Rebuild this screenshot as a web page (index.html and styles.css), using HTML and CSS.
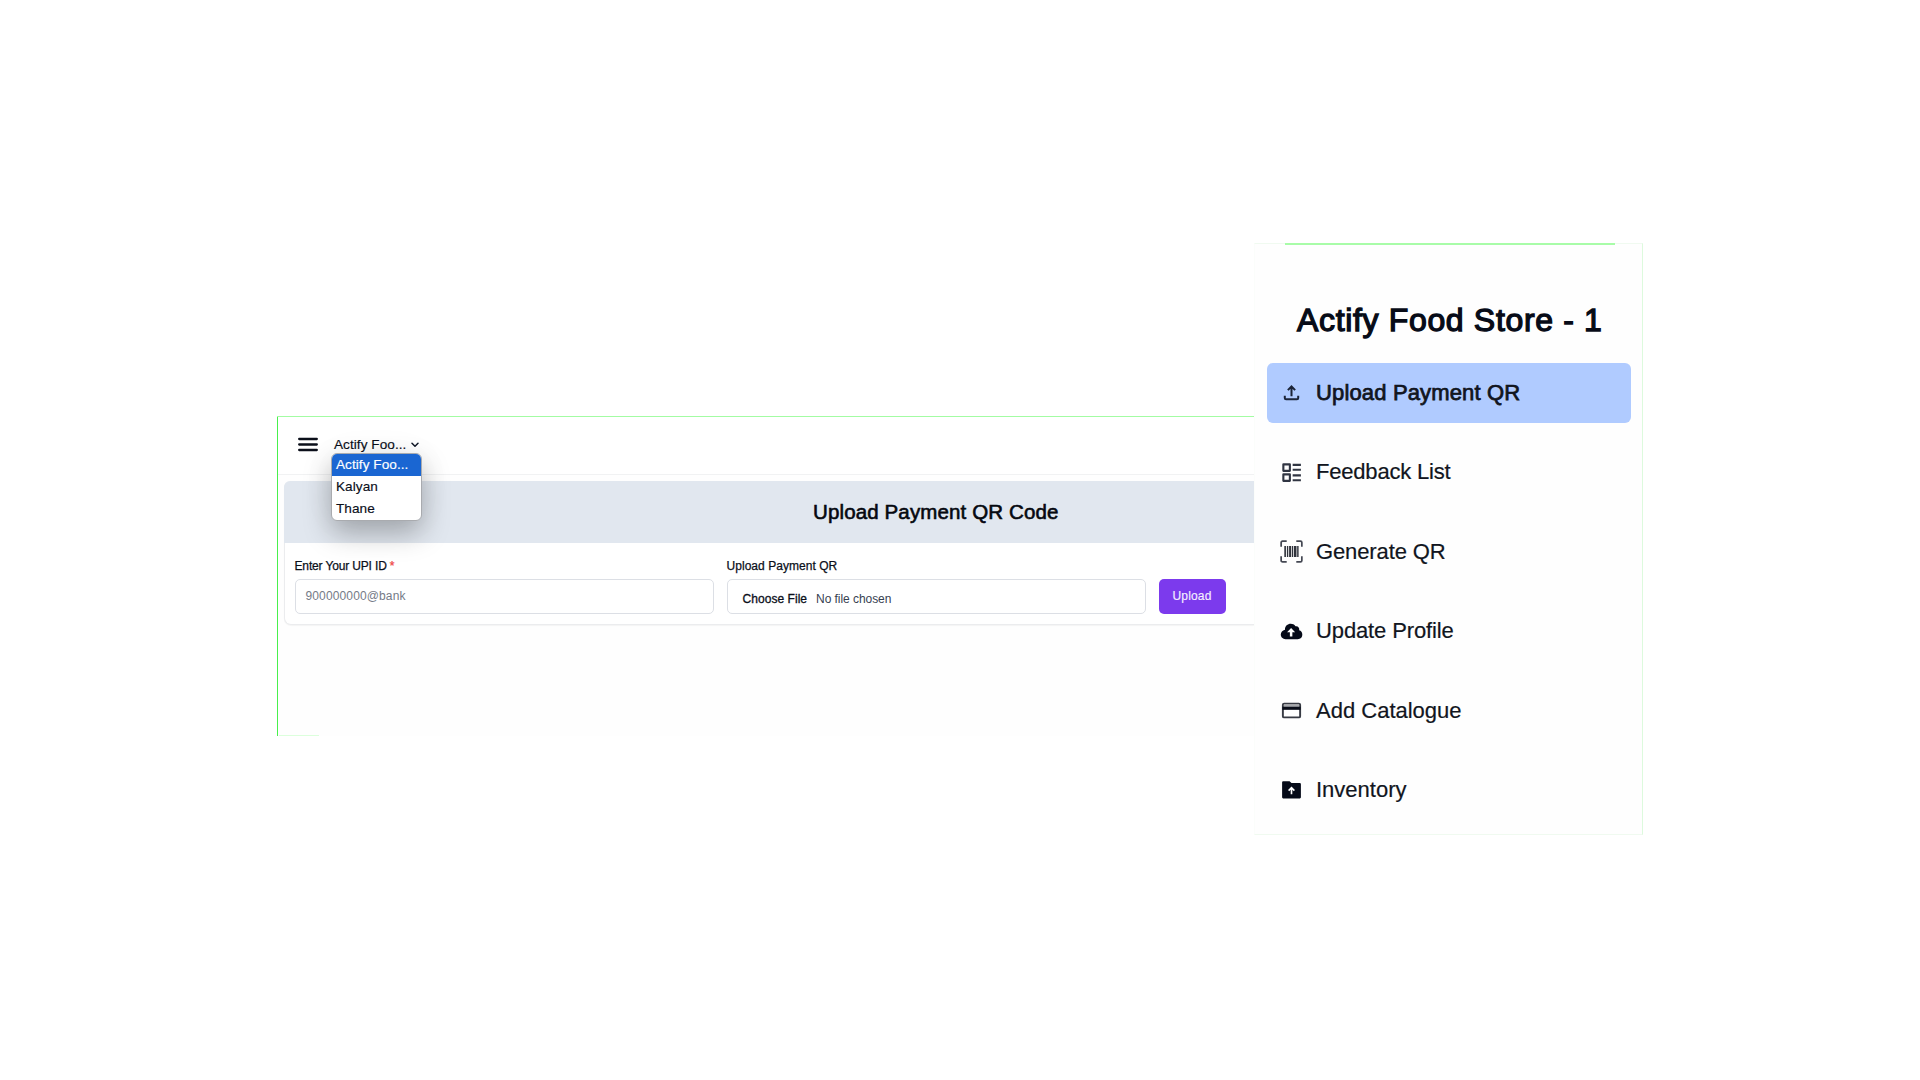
FILE: index.html
```html
<!DOCTYPE html>
<html lang="en">
<head>
<meta charset="utf-8">
<title>Upload Payment QR Code</title>
<link rel="stylesheet" href="styles.css">
</head>
<body>
<main class="stage">
  <section class="panel">
    <header class="topbar">
      <svg class="menu" width="20" height="16" viewBox="0 0 20 16"><path d="M1.200 2h17.600M1.200 7.500h17.600M1.200 13h17.600" stroke="#0b0f1a" stroke-width="2.300" stroke-linecap="round"/></svg>
      <div class="select">
        <span class="select-value">Actify Foo...</span>
        <svg width="8" height="6" viewBox="0 0 8 6"><path d="M1 1.200l3 3 3-3" fill="none" stroke="#111827" stroke-width="1.500" stroke-linecap="round" stroke-linejoin="round"/></svg>
        <ul class="options">
          <li class="selected">Actify Foo...</li>
          <li>Kalyan</li>
          <li>Thane</li>
        </ul>
      </div>
    </header>
    <div class="card">
      <h1 class="card-title">Upload Payment QR Code</h1>
      <form class="form">
        <div class="field">
          <label class="label tight">Enter Your UPI ID <span class="required">*</span></label>
          <div class="input placeholder">900000000@bank</div>
        </div>
        <div class="field">
          <label class="label">Upload Payment QR</label>
          <div class="input file"><span class="choose">Choose File</span><span class="chosen">No file chosen</span></div>
        </div>
        <button class="upload" type="button">Upload</button>
      </form>
    </div>
    <i class="edge-left"></i>
    <i class="edge-foot"></i>
  </section>

  <aside class="sidebar">
    <i class="edge-top"></i>
    <h2 class="store">Actify Food Store - 1</h2>
    <nav class="nav">
      <a class="item active">
        <svg class="icon" viewBox="0 0 24 24"><path d="M12 16V5.800M8.200 9.500L12 5.700l3.800 3.800M5 15.500v2.200q0 1.300 1.300 1.300h11.400q1.300 0 1.300-1.300v-2.200" fill="none" stroke="#1b2438" stroke-width="2.100"/></svg>
        <span>Upload Payment QR</span></a>
      <a class="item fb">
        <svg class="icon" viewBox="0 0 24 24"><path d="M3.500 3.500h6.800v6.800H3.500zM3.500 13.900h6.800v6.800H3.500zM13.200 4h8.600M13.200 9.100h8.600M13.200 15h8.600M13.200 20.100h8.600" fill="none" stroke="#303542" stroke-width="2.200" stroke-linejoin="round"/></svg>
        <span>Feedback List</span></a>
      <a class="item gen">
        <svg class="icon" viewBox="0 0 24 24"><path d="M1.200 7V2.700Q1.200 1.200 2.700 1.200H7M17 1.200h4.300Q22.800 1.200 22.800 2.700V7M22.800 17v4.300Q22.800 22.800 21.300 22.800H17M7 22.800H2.700Q1.200 22.800 1.200 21.300V17" fill="none" stroke="#444853" stroke-width="1.800"/><path d="M4.500 6.300h1.700v11.400H4.500zM7.200 6.300h1.400v11.400H7.200zM9.500 6.300h2v11.400H9.500zM12.300 6.300h1.400v11.400h-1.400zM14.500 6.300h2.700v11.400h-2.700zM17.900 6.300h1.500v11.400h-1.500z" fill="#30333c"/></svg>
        <span>Generate QR</span></a>
      <a class="item upd">
        <svg class="icon" viewBox="0 0 24 24"><path fill-rule="evenodd" d="M20 10.700C20.700 7.800 18.500 6 16.200 6.500 12.800 1.700 4.800 4 5.200 10.200 2.500 10.900.8 13 .8 15.200.8 18 3 20 5.800 20H18.500C21.500 20 23.300 18 23.300 15.400 23.300 12.800 22 11.300 20 10.700ZM12.900 17.200H10.300V12.700H7.400L11.600 8.400 15.800 12.700H12.900Z" fill="#050a18"/></svg>
        <span>Update Profile</span></a>
      <a class="item cat">
        <svg class="icon" viewBox="0 0 24 24"><rect x="3" y="4.800" width="18" height="14.400" rx="1.300" fill="#fff" stroke="#383b44" stroke-width="2"/><path d="M4 5.800h16v2.300H4z" fill="#a6a8ac"/><path d="M2.500 8h19v3.300h-19z" fill="#080c18"/></svg>
        <span>Add Catalogue</span></a>
      <a class="item inv">
        <svg class="icon" viewBox="0 0 24 24"><path d="M3.300 3.300H10l2 2h8.700q1.100 0 1.100 1.100v13.800q0 1.100-1.100 1.100H3.300q-1.100 0-1.100-1.100V4.400q0-1.100 1.100-1.100z" fill="#050a18"/><path d="M12 17V10.500M9 13.200l3-3 3 3" fill="none" stroke="#fff" stroke-width="1.700"/></svg>
        <span>Inventory</span></a>
    </nav>
  </aside>
</main>
</body>
</html>
```
FILE: styles.css
```css
* { box-sizing: border-box; }
body { margin: 0; background: #fff; color: #0b0f1a; font-family: "Liberation Sans", Arial, sans-serif; }
.stage { display: flex; align-items: flex-start; width: 1920px; height: 1080px; padding: 243px 0 0 277px; overflow: hidden; }

.panel { position: relative; width: 977px; height: 320px; margin-top: 173px; padding-left: 1px; border-top: 1px solid #a3fca3; background: #fefefe; }
.edge-left { position: absolute; left: 0; top: 0; width: 1px; height: 319px; background: #48f04c; }
.edge-foot { position: absolute; left: 2px; bottom: 0; width: 40px; height: 1px; background: #dcffdc; }

.topbar { display: flex; align-items: center; height: 58px; padding: 0 0 2px 20px; border-bottom: 1px solid #f1f2f3; background: #fff; }
.menu { margin: 1px 16px 0 0; }
.select { position: relative; display: flex; align-items: center; gap: 4px; font-size: 13.600px; line-height: 22px; letter-spacing: 0.050px; -webkit-text-stroke: 0.150px; }
.select-value { width: 73px; white-space: nowrap; }
.options { position: absolute; z-index: 2; left: -3px; top: 19px; width: 91px; height: 68px; margin: 0; padding: 0; list-style: none; overflow: hidden; border: 1px solid #a9abaf; border-radius: 6px; background: #fff; box-shadow: 0 12px 28px rgba(0, 0, 0, 0.280), 0 0 36px rgba(0, 0, 0, 0.040); }
.options li { height: 22px; padding-left: 4px; line-height: 22px; white-space: nowrap; }
.options .selected { color: #fff; background: #1a66d2; }

.card { height: 144px; margin: 6px 0 0 6px; border: solid #ebecee; border-width: 0 0 1px 1px; border-radius: 7px 0 0 7px; background: #fff; box-shadow: 0 1px 1px rgba(0, 0, 0, 0.040); }
.card-title { height: 62px; margin: 0 0 0 -1px; padding-left: 529px; border-radius: 6px 0 0 0; background: #e1e7ef; color: #05080f; font-size: 20.500px; font-weight: 400; line-height: 62px; letter-spacing: 0.130px; white-space: nowrap; -webkit-text-stroke: 0.600px; }
.form { display: flex; align-items: flex-end; height: 71px; padding-left: 9.500px; }
.field { width: 419px; margin-right: 13px; }
.label { display: block; height: 20px; font-size: 12px; line-height: 14px; white-space: nowrap; letter-spacing: 0.040px; -webkit-text-stroke: 0.250px; }
.label.tight { letter-spacing: -0.150px; }
.required { color: #ef4444; }
.input { height: 35px; padding-left: 10px; border: 1px solid #dcdfe5; border-radius: 5px; background: #fff; font-size: 12px; line-height: 33px; }
.placeholder { color: #757b87; letter-spacing: 0.130px; }
.file { display: flex; gap: 9px; padding-left: 15px; line-height: 38px; white-space: nowrap; }
.choose { letter-spacing: 0.050px; -webkit-text-stroke: 0.300px; }
.chosen { color: #374151; letter-spacing: -0.060px; }
.upload { width: 67px; height: 35px; padding: 0; border: 0; border-radius: 5px; background: #7c3aed; color: #f5f0ff; font: 12px/33px "Liberation Sans", Arial, sans-serif; letter-spacing: 0.150px; -webkit-text-stroke: 0.150px; }

.sidebar { position: relative; width: 389px; height: 592px; padding: 0 12px 0 13px; border: 1px solid #f0faf0; border-left-color: #fbfdfb; border-right-color: #ddfadd; background: #fefefe; }
.edge-top { position: absolute; left: 30px; top: -1px; width: 330px; height: 2px; background: #a8fca8; }
.store { height: 119px; margin: 0; padding: 52px 0 0 29px; font-size: 32px; font-weight: 400; line-height: 48px; letter-spacing: 0.660px; white-space: nowrap; color: #070b17; -webkit-text-stroke: 1.300px; }
.nav { display: grid; grid-auto-rows: 59.500px; gap: 19.900px; width: 364px; margin-left: -1px; }
.item { display: flex; align-items: center; gap: 13px; padding-left: 13px; border-radius: 6px; font-size: 22px; line-height: 26px; white-space: nowrap; color: #111520; -webkit-text-stroke: 0.200px; }
.icon { width: 23px; height: 23px; flex: none; }
.active { background: #b0cbff; letter-spacing: 0.150px; -webkit-text-stroke: 0.750px; }
.fb { letter-spacing: -0.200px; }
.gen, .upd { letter-spacing: -0.120px; }
.upd, .cat { padding-top: 1px; }
```
